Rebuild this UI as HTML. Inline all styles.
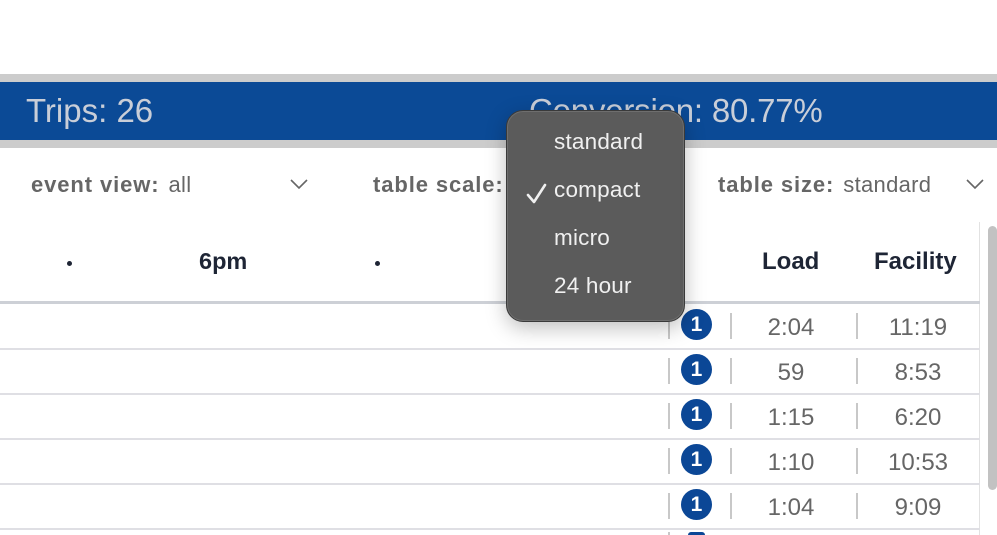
<!DOCTYPE html>
<html><head><meta charset="utf-8"><style>
*{margin:0;padding:0;box-sizing:border-box}
html,body{width:997px;height:535px;overflow:hidden}
body{background:#fff;font-family:"Liberation Sans",Helvetica,Arial,sans-serif}
#w{position:relative;width:997px;height:535px;overflow:hidden}
.a{position:absolute}
.hl{left:0;width:980px;height:2px;background:#dfdfe4}
.vs{width:2px;height:26px;background:#c8c8c8}
.num{font-size:24px;color:#666;text-align:center;width:120px}
.badge{width:31px;height:31px;border-radius:50%;background:#0b4796;color:#fff;font-weight:bold;font-size:21px;text-align:center;line-height:31px}
.lbl{font-size:22px;color:#666;top:172px;white-space:nowrap}
.lbl b{font-weight:bold;letter-spacing:0.9px}
.lbl span{font-weight:normal;margin-left:9px;letter-spacing:0.3px}
.chev{top:178px}
.mi{position:absolute;left:47px;font-size:22.5px;color:#f0f0f0;letter-spacing:0.2px}
.hd{font-weight:bold;color:#1e2535;top:248px}
</style></head><body><div id="w">
<div class="a" style="left:0;top:74px;width:997px;height:8px;background:#cccccc"></div>
<div class="a" style="left:0;top:82px;width:997px;height:58px;background:#0b4a96"></div>
<div class="a" style="left:0;top:140px;width:997px;height:8px;background:#cccccc"></div>
<div class="a" style="left:26px;top:92px;font-size:33px;color:#c9ced8">Trips: 26</div>
<div class="a" style="left:529px;top:92px;font-size:33px;color:#c9ced8;letter-spacing:-0.2px">Conversion: 80.77%</div>

<div class="a lbl" style="left:31px"><b>event view:</b><span>all</span></div>
<svg class="a chev" style="left:290px" width="18" height="12"><path d="M1 2 L9 10 L17 2" stroke="#666" stroke-width="1.6" fill="none"/></svg>
<div class="a lbl" style="left:373px"><b>table scale:</b></div>
<div class="a lbl" style="left:718px"><b>table size:</b><span>standard</span></div>
<svg class="a chev" style="left:966px" width="18" height="12"><path d="M1 2 L9 10 L17 2" stroke="#666" stroke-width="1.6" fill="none"/></svg>

<div class="a" style="left:979px;top:222px;width:1px;height:313px;background:#e2e2e2"></div>
<div class="a" style="left:988px;top:226px;width:9px;height:264px;border-radius:5px;background:#c2c2c2"></div>

<div class="a" style="left:67px;top:261px;width:5px;height:5px;border-radius:50%;background:#1e2535"></div>
<div class="a" style="left:375px;top:261px;width:5px;height:5px;border-radius:50%;background:#1e2535"></div>
<div class="a hd" style="left:199px;font-size:23.5px">6pm</div>
<div class="a hd" style="left:762px;font-size:24px">Load</div>
<div class="a hd" style="left:874px;font-size:24px">Facility</div>
<div class="a" style="left:0;top:301px;width:980px;height:3px;background:#cdd0d6"></div>

<div class="a hl" style="top:348px"></div>
<div class="a hl" style="top:393px"></div>
<div class="a hl" style="top:438px"></div>
<div class="a hl" style="top:483px"></div>
<div class="a hl" style="top:528px"></div>

<div class="a vs" style="left:668px;top:313px"></div><div class="a vs" style="left:730px;top:313px"></div><div class="a vs" style="left:856px;top:313px"></div>
<div class="a vs" style="left:668px;top:358px"></div><div class="a vs" style="left:730px;top:358px"></div><div class="a vs" style="left:856px;top:358px"></div>
<div class="a vs" style="left:668px;top:403px"></div><div class="a vs" style="left:730px;top:403px"></div><div class="a vs" style="left:856px;top:403px"></div>
<div class="a vs" style="left:668px;top:448px"></div><div class="a vs" style="left:730px;top:448px"></div><div class="a vs" style="left:856px;top:448px"></div>
<div class="a vs" style="left:668px;top:493px"></div><div class="a vs" style="left:730px;top:493px"></div><div class="a vs" style="left:856px;top:493px"></div>
<div class="a vs" style="left:668px;top:532px;height:3px"></div>

<div class="a badge" style="left:681px;top:309px">1</div>
<div class="a badge" style="left:681px;top:354px">1</div>
<div class="a badge" style="left:681px;top:399px">1</div>
<div class="a badge" style="left:681px;top:444px">1</div>
<div class="a badge" style="left:681px;top:489px">1</div>
<div class="a" style="left:688px;top:532px;width:17px;height:3px;border-radius:8px 8px 0 0;background:#0b4796"></div>

<div class="a num" style="left:731px;top:314px">2:04</div><div class="a num" style="left:858px;top:314px">11:19</div>
<div class="a num" style="left:731px;top:359px">59</div><div class="a num" style="left:858px;top:359px">8:53</div>
<div class="a num" style="left:731px;top:404px">1:15</div><div class="a num" style="left:858px;top:404px">6:20</div>
<div class="a num" style="left:731px;top:449px">1:10</div><div class="a num" style="left:858px;top:449px">10:53</div>
<div class="a num" style="left:731px;top:494px">1:04</div><div class="a num" style="left:858px;top:494px">9:09</div>

<div class="a" style="left:506px;top:110px;width:179px;height:212px;border-radius:17px;background:#5b5b5b;border:1.5px solid #3a3a3a;box-shadow:0 6px 20px rgba(0,0,0,0.25),inset 0 0 0 1px rgba(255,255,255,0.12)">
  <div class="mi" style="top:18px">standard</div>
  <div class="mi" style="top:66px">compact</div>
  <svg class="a" style="left:19px;top:72px" width="22" height="22"><path d="M2 12 L8 19 L19 2" stroke="#f0f0f0" stroke-width="2.6" fill="none" stroke-linecap="round" stroke-linejoin="round"/></svg>
  <div class="mi" style="top:114px">micro</div>
  <div class="mi" style="top:162px">24 hour</div>
</div>
</div></body></html>
